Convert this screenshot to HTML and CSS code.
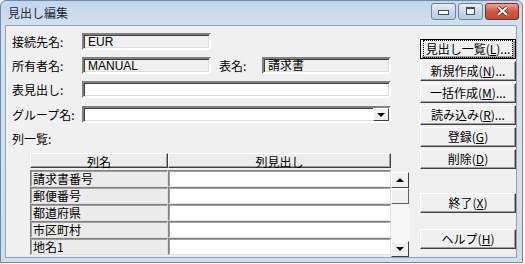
FILE: index.html
```html
<!DOCTYPE html>
<html lang="ja">
<head>
    <meta charset="utf-8">
    <title>見出し編集</title>
    <link rel="stylesheet" href="styles.css">
</head>
<body>
    <div class="window">
        <div class="titlebar">
            <span class="title">見出し編集</span>
            <div class="caption_btns">
                <span class="cap_btn min"><i></i></span>
                <span class="cap_btn max"><i></i></span>
                <span class="cap_btn close">
                    <svg width="13" height="10" viewBox="0 0 13 10">
                        <path d="M2 1 L11 9 M11 1 L2 9" stroke="#5a1a10" stroke-width="3.4" />
                        <path d="M2 1 L11 9 M11 1 L2 9" stroke="#fff" stroke-width="2" />
                    </svg>
                </span>
            </div>
        </div>

        <div class="client">
            <div class="form">
                <!-- connection -->
                <div class="row">
                    <label class="lbl">接続先名:</label>
                    <div class="field readonly short">EUR</div>
                </div>
                <div class="row">
                    <label class="lbl">所有者名:</label>
                    <div class="field readonly short">MANUAL</div>
                    <label class="lbl lbl_table">表名:</label>
                    <div class="field readonly short">請求書</div>
                </div>
                <div class="row">
                    <label class="lbl">表見出し:</label>
                    <div class="field wide"></div>
                </div>
                <div class="row">
                    <label class="lbl">グループ名:</label>
                    <div class="field wide combo">
                        <span class="combo_btn"><b class="arrow_down"></b></span>
                    </div>
                </div>
                <div class="list_label">列一覧:</div>

                <!-- column list -->
                <div class="grid_wrap">
                    <div class="grid">
                        <div class="head">列名</div>
                        <div class="head">列見出し</div>
                        <div class="cell name">請求書番号</div>
                        <div class="cell"></div>
                        <div class="cell name">郵便番号</div>
                        <div class="cell"></div>
                        <div class="cell name">都道府県</div>
                        <div class="cell"></div>
                        <div class="cell name">市区町村</div>
                        <div class="cell"></div>
                        <div class="cell name">地名1</div>
                        <div class="cell"></div>
                    </div>
                    <div class="vscroll">
                        <span class="sb_btn"><b class="arrow_up"></b></span>
                        <span class="sb_thumb"></span>
                        <span class="sb_track"></span>
                        <span class="sb_btn"><b class="arrow_down"></b></span>
                    </div>
                </div>
            </div>

            <div class="actions">
                <button class="btn focused"><span>見出し一覧(<u>L</u>)...</span></button>
                <button class="btn">新規作成(<u>N</u>)...</button>
                <button class="btn">一括作成(<u>M</u>)...</button>
                <button class="btn">読み込み(<u>R</u>)...</button>
                <button class="btn">登録(<u>G</u>)</button>
                <button class="btn">削除(<u>D</u>)</button>
                <button class="btn btn_exit">終了(<u>X</u>)</button>
                <button class="btn btn_help">ヘルプ(<u>H</u>)</button>
            </div>
        </div>
    </div>
</body>
</html>
```

FILE: styles.css
```css
body {
    margin: 0;
    background: #ffffff;
    font-family: "Noto Sans CJK JP", "DejaVu Sans", sans-serif;
    font-size: 12px;
    color: #000;
}

.window {
    border: 1px solid #6f8aa8;
    border-radius: 6px 6px 0 0;
    background: linear-gradient(#c3d6ec, #d5e2f1 30px, #cfdded);
    display: flex;
    flex-direction: column;
    padding: 0 5px 4px 4px;
    width: 512px;
    height: 257px;
}

.titlebar {
    height: 24px;
    display: flex;
    align-items: center;
    justify-content: space-between;
}

.title {
    margin-left: 3px;
    margin-top: -2px;
    font-size: 12px;
    color: #1e2c3c;
}

.caption_btns {
    display: flex;
    gap: 2px;
    margin-top: -4px;
    margin-right: -2px;
}

.cap_btn {
    height: 15px;
    width: 23px;
    border: 1px solid #6d84a0;
    border-radius: 3px;
    background: linear-gradient(#e6eef8, #c9d8ea 50%, #b9cbe2);
    display: flex;
    align-items: center;
    justify-content: center;
}

.cap_btn.close {
    width: 32px;
    border-color: #7b2a1c;
    background: linear-gradient(#e8a596, #d0583f 50%, #c44a30);
}

.cap_btn.min i {
    width: 9px;
    height: 3px;
    border: 1px solid #3a4d66;
    background: #fff;
    margin-top: 3px;
}

.cap_btn.max i {
    width: 7px;
    height: 5px;
    border: 1px solid #3a4d66;
    border-top-width: 2px;
    background: #fff;
}

.client {
    flex: 1;
    background: #f0f0f0;
    border: 1px solid #8ea3bd;
    display: flex;
    padding: 7px 0 0 6px;
}

.form {
    width: 404px;
}

.row {
    display: flex;
    align-items: center;
    height: 17px;
    margin-bottom: 7px;
}

.row:nth-child(3) {
    margin-bottom: 8px;
}

.lbl {
    width: 70px;
    flex: none;
}

.lbl_table {
    width: 43px;
    margin-left: 8px;
}

.field {
    height: 17px;
    box-sizing: border-box;
    border: 2px solid;
    border-color: #808080 #ffffff #ffffff #808080;
    box-shadow: inset 1px 1px 0 #404040, inset -1px -1px 0 #dcdcdc;
    background: #fff;
    padding: 0 4px;
    line-height: 14px;
    font-size: 12px;
    font-family: "Liberation Sans", "Noto Sans CJK JP", sans-serif;
}

.field.readonly {
    background: #f0f0f0;
}

.field.short {
    width: 129px;
}

.field.wide {
    width: 309px;
}

.combo {
    position: relative;
}

.combo_btn {
    position: absolute;
    right: 0;
    top: 0;
    width: 16px;
    height: 13px;
    background: #f0f0f0;
    border: 1px solid;
    border-color: #fff #404040 #404040 #fff;
    box-sizing: border-box;
    display: flex;
    align-items: center;
    justify-content: center;
}

.arrow_down {
    width: 0;
    height: 0;
    border-left: 4px solid transparent;
    border-right: 4px solid transparent;
    border-top: 4px solid #000;
}

.arrow_up {
    width: 0;
    height: 0;
    border-left: 4px solid transparent;
    border-right: 4px solid transparent;
    border-bottom: 4px solid #000;
}

.list_label {
    height: 17px;
    margin-top: 3px;
    margin-bottom: 6px;
}

.grid_wrap {
    display: flex;
    margin-left: 18px;
}

.grid {
    display: grid;
    grid-template-columns: 138px 223px;
    grid-auto-rows: 17px;
    width: 361px;
}

.head {
    border: 1px solid;
    border-color: #fff #404040 #404040 #fff;
    box-shadow: inset -1px -1px 0 #a0a0a0;
    background: #ececec;
    text-align: center;
    line-height: 15px;
    margin-bottom: 2px;
}

.cell {
    border: 1px solid;
    border-color: #808080 #e0e0e0 #e0e0e0 #808080;
    box-shadow: inset 1px 1px 0 #a0a0a0;
    background: #fff;
    line-height: 15px;
    padding-left: 2px;
}

.cell.name {
    background: #ebebeb;
}

.vscroll {
    width: 18px;
    margin-top: 19px;
    height: 85px;
    display: flex;
    flex-direction: column;
    background: #f4f4f4;
}

.sb_btn {
    height: 16px;
    box-sizing: border-box;
    border: 1px solid;
    border-color: #fff #404040 #404040 #fff;
    background: #f0f0f0;
    display: flex;
    align-items: center;
    justify-content: center;
}

.sb_thumb {
    height: 16px;
    box-sizing: border-box;
    border: 1px solid;
    border-color: #fff #606060 #606060 #fff;
    background: #f0f0f0;
}

.sb_track {
    flex: 1;
    background: #f6f6f6;
}

.actions {
    display: flex;
    flex-direction: column;
    margin-left: 6px;
    padding-top: 6px;
    gap: 2px;
}

.btn {
    width: 96px;
    height: 20px;
    padding: 0;
    background: #f0f0f0;
    border: 1px solid;
    border-color: #fff #404040 #404040 #fff;
    box-shadow: inset -1px -1px 0 #a0a0a0;
    font-family: "Noto Sans CJK JP", "DejaVu Sans", sans-serif;
    font-size: 12px;
    color: #000;
    line-height: 16px;
}

.btn u {
    text-underline-offset: 1px;
}

.btn.focused {
    border-color: #000;
    box-shadow: inset 1px 1px 0 #fff, inset -2px -2px 0 #a0a0a0;
}

.btn.focused span {
    display: block;
    margin: 0 3px;
    outline: 1px dotted #000;
}

.btn_exit {
    margin-top: 22px;
}

.btn_help {
    margin-top: 14px;
}
```
